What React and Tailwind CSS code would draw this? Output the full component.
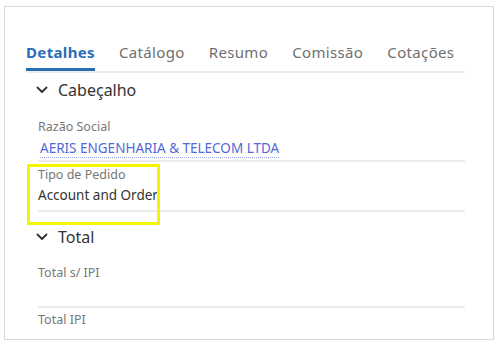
import React from "react";

function Chevron() {
  return (
    <svg width="12" height="8" viewBox="0 0 12 8" className="shrink-0">
      <path d="M1.5 1.5 L6 6 L10.5 1.5" fill="none" stroke="#333" strokeWidth="1.8" strokeLinecap="round" strokeLinejoin="round" />
    </svg>
  );
}

export default function App() {
  const tabs = ["Detalhes", "Catálogo", "Resumo", "Comissão", "Cotações"];
  return (
    <div className="w-[499px] h-[345px] bg-white pt-[6px] pl-[4px]" style={{ fontFamily: "'Noto Sans', 'Open Sans', sans-serif" }}>
      <div className="w-[490px] h-[334px] border border-[#d9d9d9] pl-[21px] pr-[28px] pt-[32px] overflow-hidden">
        <div className="flex gap-[24px] border-b-2 border-[#ececec] h-[34px]">
          {tabs.map((t, i) => (
            <div
              key={t}
              className={
                "text-[15px] leading-[20px] tracking-[0.35px] h-[32px] pt-[3px] " +
                (i === 0 ? "font-bold text-[#2a6db5] border-b-[3px] border-[#2a6db5]" : "text-[#6f6f6f]")
              }
            >
              {t}
            </div>
          ))}
        </div>
        <div className="flex items-center gap-[10px] pl-[10px] h-[34px]">
          <Chevron />
          <span className="text-[16px] text-[#333]">Cabeçalho</span>
        </div>
        <div className="pl-[12px] pt-[11px]">
          <div className="text-[12.5px] text-[#777] leading-[18px]">Razão Social</div>
          <div className="mt-[1px] pb-[2px] leading-[20px] border-b-2 border-[#ececec]">
            <span className="ml-[2px] text-[13.5px] text-[#5467d8] leading-[20px] border-b border-dotted border-[#9aa6ea]">
              AERIS ENGENHARIA &amp; TELECOM LTDA
            </span>
          </div>
        </div>
        <div className="relative pl-[12px] pt-[4px]">
          <div className="absolute left-[1px] top-[2px] w-[133px] h-[61px] border-[3px] border-[#f5f500]" />
          <div className="text-[12.5px] text-[#777] leading-[18px]">Tipo de Pedido</div>
          <div className="text-[13.5px] text-[#333] leading-[22px] pb-[4px] border-b-2 border-[#ececec]">Account and Order</div>
        </div>
        <div className="flex items-center gap-[10px] pl-[10px] h-[34px] mt-[8px]">
          <Chevron />
          <span className="text-[16px] text-[#333]">Total</span>
        </div>
        <div className="pl-[12px] pt-[10px]">
          <div className="text-[12.5px] text-[#777] leading-[18px] border-b-2 border-[#ececec] h-[44px]">Total s/ IPI</div>
          <div className="text-[12.5px] text-[#777] leading-[18px] pt-[3px]">Total IPI</div>
        </div>
      </div>
    </div>
  );
}
